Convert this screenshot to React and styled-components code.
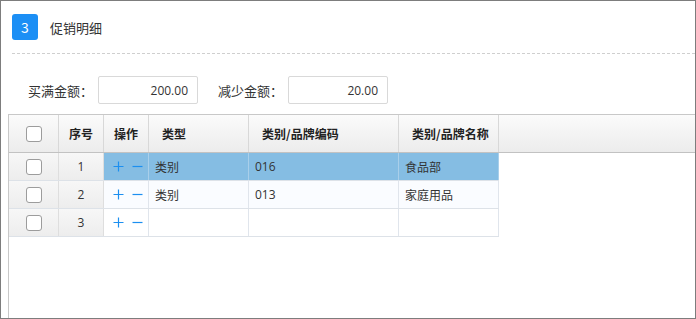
import styled, { createGlobalStyle } from 'styled-components';

const GlobalStyle = createGlobalStyle`
  html, body {
    margin: 0;
    padding: 0;
    background: #fff;
  }
  body {
    font-family: "Noto Sans CJK SC", "Noto Sans", sans-serif;
    color: #333;
  }
`;

const COLUMNS = '50px 45px 45px 100px 150px 100px';

const Frame = styled.div`
  box-sizing: border-box;
  width: 696px;
  height: 319px;
  border: 1px solid #7d7d7d;
  display: flex;
  flex-direction: column;
  overflow: hidden;
`;

const Header = styled.div`
  display: flex;
  align-items: center;
  gap: 12px;
  height: 52px;
  box-sizing: border-box;
  padding-left: 11px;
`;

const Badge = styled.div`
  width: 26px;
  height: 26px;
  border-radius: 3px;
  background: #1c8ff5;
  color: #fff;
  font-size: 14px;
  display: flex;
  align-items: center;
  justify-content: center;
`;

const Title = styled.span`
  font-size: 13px;
  color: #333;
`;

const Divider = styled.div`
  margin-left: 11px;
  border-top: 1px dashed #cfcfcf;
`;

const FormRow = styled.div`
  display: flex;
  align-items: center;
  padding: 22px 0 0 27px;
  height: 28px;
`;

const Label = styled.label`
  width: 70px;
  font-size: 13px;
  color: #333;
  white-space: nowrap;
`;

const Amount = styled.div`
  box-sizing: border-box;
  width: 100px;
  height: 28px;
  border: 1px solid #d9d9d9;
  border-radius: 2px;
  font-family: "Open Sans", "Liberation Sans", sans-serif;
  font-size: 12px;
  color: #333;
  display: flex;
  align-items: center;
  justify-content: flex-end;
  padding-right: 9px;
  margin-right: ${(p) => p.$gap || 0}px;
`;

const Table = styled.div`
  flex: 1;
  margin: 10px 0 0 7px;
  border-left: 1px solid #c8c8c8;
  border-top: 1px solid #c8c8c8;
`;

const HeadRow = styled.div`
  display: grid;
  grid-template-columns: ${COLUMNS} 1fr;
  height: 38px;
  box-sizing: border-box;
  border-bottom: 1px solid #c2c2c2;
  background: linear-gradient(#fbfbfb, #ececec);
`;

const HeadCell = styled.div`
  box-sizing: border-box;
  border-right: ${(p) => (p.$last ? 'none' : '1px solid #d8d8d8')};
  display: flex;
  align-items: center;
  justify-content: ${(p) => (p.$center ? 'center' : 'flex-start')};
  padding-left: ${(p) => (p.$center ? 0 : 13)}px;
  font-size: 12px;
  font-weight: bold;
  color: #222;
`;

const BodyRow = styled.div`
  display: grid;
  grid-template-columns: ${COLUMNS};
  height: 28px;
  box-sizing: border-box;
  border-bottom: 1px solid #dde2e8;
  width: 490px;
  background: ${(p) => (p.$selected ? '#85bde3' : p.$alt ? '#fafcff' : '#fff')};
`;

const Cell = styled.div`
  box-sizing: border-box;
  border-right: 1px solid ${(p) => (p.$selected ? '#a9cfea' : '#e0e5ec')};
  display: flex;
  align-items: center;
  justify-content: ${(p) => (p.$center ? 'center' : 'flex-start')};
  padding-left: ${(p) => (p.$center ? 0 : p.$pad ?? 6)}px;
  font-size: 12px;
  color: #333;
`;

const FixedCell = styled(Cell)`
  background: linear-gradient(#f7f7f7, #ededed);
  border-right-color: #dedede;
  font-family: "Open Sans", "Noto Sans CJK SC", sans-serif;
`;

const Code = styled.span`
  font-family: "Open Sans", "Noto Sans", sans-serif;
`;

const Check = styled.span`
  box-sizing: border-box;
  width: 16px;
  height: 16px;
  border: 1px solid #9c9c9c;
  border-radius: 3px;
  background: #fff;
`;

const Ops = styled.div`
  display: flex;
  align-items: center;
  gap: 8px;
`;

const PlusIcon = () => (
  <svg width="11" height="11" viewBox="0 0 11 11">
    <path d="M5.5 0.5v10M0.5 5.5h10" stroke="#1c8ff0" strokeWidth="1.2" />
  </svg>
);

const MinusIcon = () => (
  <svg width="11" height="11" viewBox="0 0 11 11">
    <path d="M0.5 5.5h10" stroke="#1c8ff0" strokeWidth="1.2" />
  </svg>
);

const rows = [
  { no: 1, type: '类别', code: '016', name: '食品部', selected: true },
  { no: 2, type: '类别', code: '013', name: '家庭用品', alt: true },
  { no: 3, type: '', code: '', name: '' },
];

function App() {
  return (
    <>
      <GlobalStyle />
      <Frame>
        <Header>
          <Badge>3</Badge>
          <Title>促销明细</Title>
        </Header>
        <Divider />
        <FormRow>
          <Label>买满金额：</Label>
          <Amount $gap={20}>200.00</Amount>
          <Label>减少金额：</Label>
          <Amount>20.00</Amount>
        </FormRow>
        <Table>
          <HeadRow>
            <HeadCell $center>
              <Check />
            </HeadCell>
            <HeadCell $center>序号</HeadCell>
            <HeadCell $center>操作</HeadCell>
            <HeadCell>类型</HeadCell>
            <HeadCell>类别/品牌编码</HeadCell>
            <HeadCell>类别/品牌名称</HeadCell>
            <HeadCell $last />
          </HeadRow>
          {rows.map((r) => (
            <BodyRow key={r.no} $selected={r.selected} $alt={r.alt}>
              <FixedCell $center>
                <Check />
              </FixedCell>
              <FixedCell $center>{r.no}</FixedCell>
              <Cell $selected={r.selected} $pad={9}>
                <Ops>
                  <PlusIcon />
                  <MinusIcon />
                </Ops>
              </Cell>
              <Cell $selected={r.selected}>{r.type}</Cell>
              <Cell $selected={r.selected}>
                <Code>{r.code}</Code>
              </Cell>
              <Cell $selected={r.selected}>{r.name}</Cell>
            </BodyRow>
          ))}
        </Table>
      </Frame>
    </>
  );
}

export default App;
